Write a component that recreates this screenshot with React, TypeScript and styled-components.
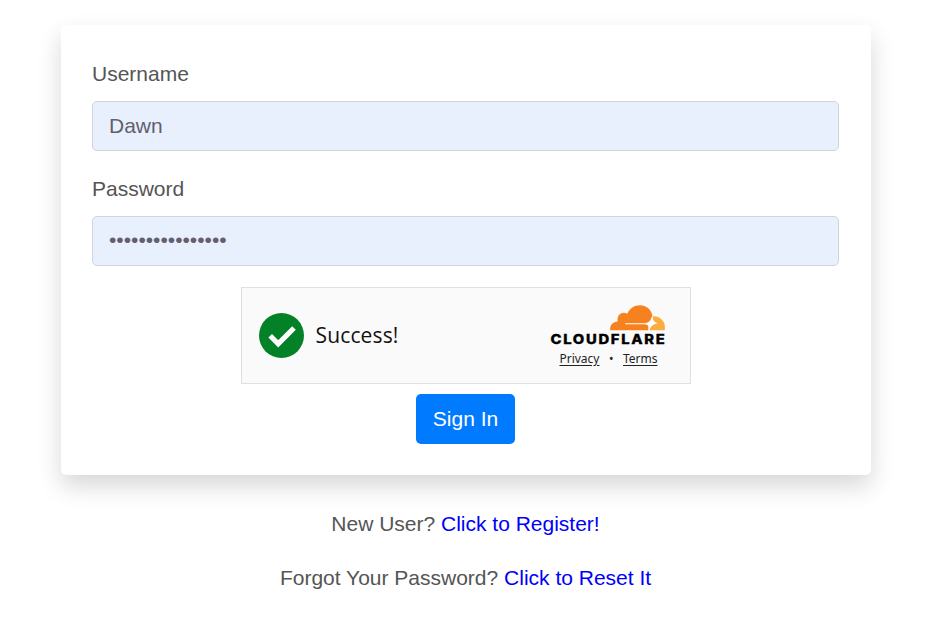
import React from "react";
import styled, { createGlobalStyle } from "styled-components";

const GlobalStyle = createGlobalStyle`
  * { box-sizing: border-box; }
  body {
    margin: 0;
    background: #fff;
    color: #555;
    font: 21px/31px "Liberation Sans", Arial, sans-serif;
    overflow: hidden;
  }
`;

const Page = styled.main`
  display: flex;
  flex-direction: column;
  align-items: center;
  height: 644px;
  padding: 25px 59px 0 61px;
`;

const Card = styled.form`
  display: flex;
  flex-direction: column;
  align-items: center;
  width: 810px;
  height: 450px;
  padding: 33px 32px 0 31px;
  border-radius: 5px;
  background: #fff;
  box-shadow: 0 11px 25px rgba(0, 0, 0, 0.16);
`;

const Field = styled.div`
  display: flex;
  flex-direction: column;
  gap: 12px;
  width: 100%;

  & + & { margin-top: 22px; }
`;

const Label = styled.label`
  height: 31px;
`;

const Input = styled.input`
  width: 100%;
  height: 50px;
  padding: 0 16px;
  border: 1px solid #ced4da;
  border-radius: 5px;
  outline: none;
  background: #e8f0fe;
  color: #635f6c;
  font: inherit;

  &[type="password"] { padding-bottom: 2px; }
`;

const Widget = styled.div`
  display: flex;
  align-items: center;
  justify-content: space-between;
  width: 450px;
  height: 97px;
  margin: 21px 0 10px;
  padding: 0 24px 0 17px;
  border: 1px solid #e0e0e0;
  background: #fafafa;
  color: #232323;
  font-family: "Noto Sans", "Open Sans", sans-serif;
`;

const Status = styled.div`
  display: flex;
  align-items: center;
  gap: 12px;
  color: #111;
  font-family: "Open Sans", "Noto Sans", sans-serif;
  font-size: 21px;
  letter-spacing: 0.15px;
`;

const Brand = styled.div`
  display: flex;
  flex-direction: column;
  align-items: center;
  width: 116px;
`;

const Legal = styled.div`
  display: flex;
  align-items: center;
  gap: 9.5px;
  height: 18px;
  margin: 4px 0 0 2px;
  font-size: 12px;
  line-height: 18px;
`;

const LegalLink = styled.a`
  color: #232323;
  text-decoration: underline;
  text-underline-offset: 2px;
`;

const SignIn = styled.button`
  width: 99px;
  height: 50px;
  padding: 0 0 1px;
  border: 0;
  border-radius: 5px;
  background: #007bff;
  color: #fff;
  font: inherit;
`;

const Prompt = styled.p`
  height: 31px;
  margin: 33px 1px 0 0;

  & + & { margin-top: 23px; }
`;

const PromptLink = styled.a`
  color: #0000fa;
  text-decoration: none;
`;

const Check = () => (
  <svg width="45" height="45" viewBox="0 0 45 45">
    <circle cx="22.5" cy="22.5" r="22.5" fill="#038127" />
    <path d="M11.2 22.8 19.2 30.8 35 15" fill="none" stroke="#fff" strokeWidth="5.1" />
  </svg>
);

const CloudflareLogo = () => (
  <svg width="116" height="42" viewBox="0 0 116 42" overflow="visible">
    <path
      d="M60.2 26.3C59.6 21.4 63 17.7 67.8 17.6C66.4 11.2 71.8 6.8 77.3 9.8C79.7 4.2 84 1.2 90 1.2C96.2 1.2 101.2 5.5 102.3 11.2L98.8 26.3Z"
      fill="#f6821f"
    />
    <path
      d="M102.8 12.2C109.5 11.8 114.9 16.7 114.9 23C114.9 24.3 114.9 25.7 114.5 26.3H99.3L101.5 20.2Z"
      fill="#fbad41"
    />
    <path
      d="M75.2 19.2H95C98.8 19 100.8 16.5 102.4 11.5L102.8 15.2C104 17.4 105.4 18.7 108 19.3C103.4 20 100.9 22.2 98.9 26.4H98C99.1 23 98.3 20.4 94.8 20.3H75.2Z"
      fill="#fff"
    />
    <text
      x="0.5"
      y="39.7"
      fill="#000"
      stroke="#000"
      strokeWidth="0.3"
      fontFamily="Inter, sans-serif"
      fontSize="13.2"
      fontWeight="800"
      textLength="116"
      lengthAdjust="spacingAndGlyphs"
      letterSpacing="1.5"
    >
      CLOUDFLARE
    </text>
  </svg>
);

export default function App() {
  return (
    <>
      <GlobalStyle />
      <Page>
        <Card onSubmit={(e) => e.preventDefault()}>
          <Field>
            <Label htmlFor="username">Username</Label>
            <Input id="username" defaultValue="Dawn" />
          </Field>
          <Field>
            <Label htmlFor="password">Password</Label>
            <Input id="password" type="password" defaultValue="dawn-password-16" />
          </Field>
          <Widget>
            <Status>
              <Check />
              <span>Success!</span>
            </Status>
            <Brand>
              <CloudflareLogo />
              <Legal>
                <LegalLink href="#">Privacy</LegalLink>
                <span>•</span>
                <LegalLink href="#">Terms</LegalLink>
              </Legal>
            </Brand>
          </Widget>
          <SignIn type="submit">Sign In</SignIn>
        </Card>
        <Prompt>
          New User? <PromptLink href="#">Click to Register!</PromptLink>
        </Prompt>
        <Prompt>
          Forgot Your Password? <PromptLink href="#">Click to Reset It</PromptLink>
        </Prompt>
      </Page>
    </>
  );
}
